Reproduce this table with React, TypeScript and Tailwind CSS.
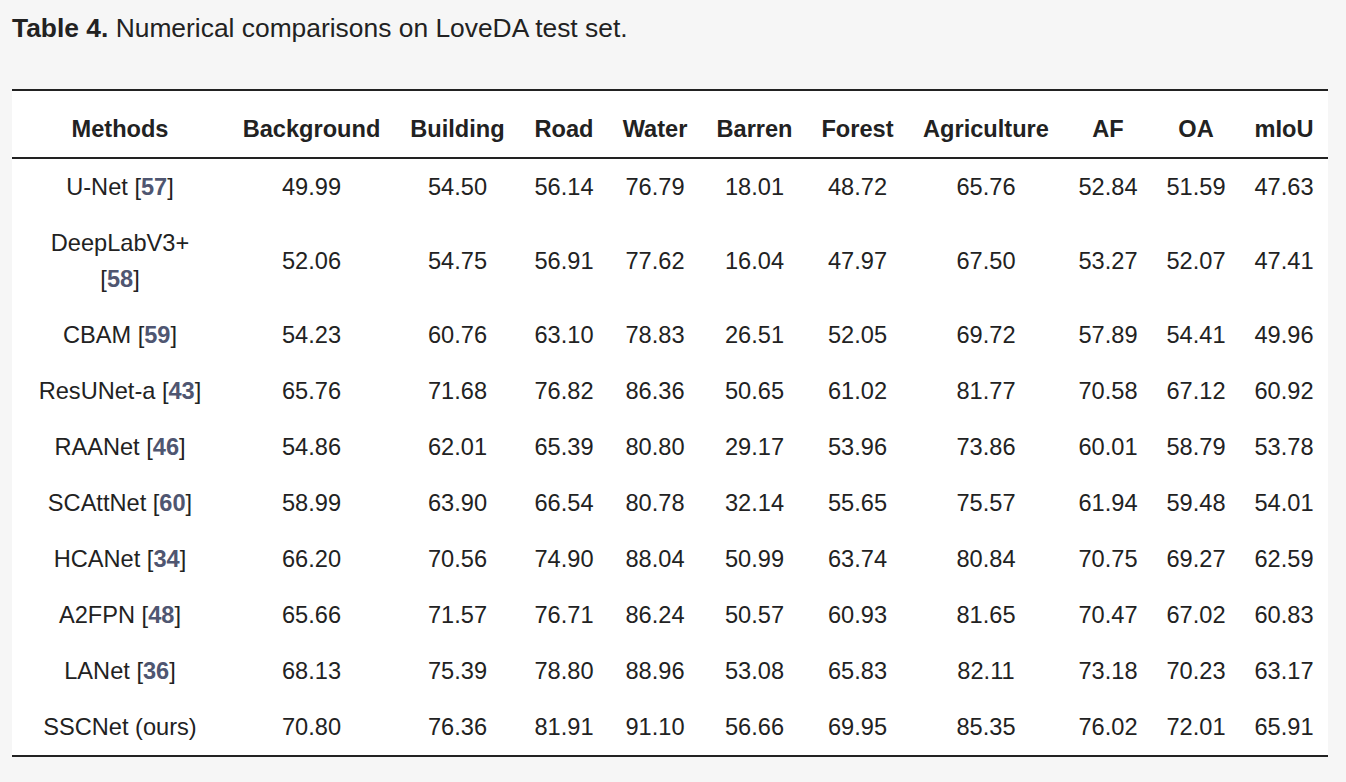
import React from "react";

type Row = { name: string; ref?: string; wrap?: boolean; vals: string[] };

const rows: Row[] = [
  { name: "U-Net", ref: "57", vals: ["49.99", "54.50", "56.14", "76.79", "18.01", "48.72", "65.76", "52.84", "51.59", "47.63"] },
  { name: "DeepLabV3+", ref: "58", wrap: true, vals: ["52.06", "54.75", "56.91", "77.62", "16.04", "47.97", "67.50", "53.27", "52.07", "47.41"] },
  { name: "CBAM", ref: "59", vals: ["54.23", "60.76", "63.10", "78.83", "26.51", "52.05", "69.72", "57.89", "54.41", "49.96"] },
  { name: "ResUNet-a", ref: "43", vals: ["65.76", "71.68", "76.82", "86.36", "50.65", "61.02", "81.77", "70.58", "67.12", "60.92"] },
  { name: "RAANet", ref: "46", vals: ["54.86", "62.01", "65.39", "80.80", "29.17", "53.96", "73.86", "60.01", "58.79", "53.78"] },
  { name: "SCAttNet", ref: "60", vals: ["58.99", "63.90", "66.54", "80.78", "32.14", "55.65", "75.57", "61.94", "59.48", "54.01"] },
  { name: "HCANet", ref: "34", vals: ["66.20", "70.56", "74.90", "88.04", "50.99", "63.74", "80.84", "70.75", "69.27", "62.59"] },
  { name: "A2FPN", ref: "48", vals: ["65.66", "71.57", "76.71", "86.24", "50.57", "60.93", "81.65", "70.47", "67.02", "60.83"] },
  { name: "LANet", ref: "36", vals: ["68.13", "75.39", "78.80", "88.96", "53.08", "65.83", "82.11", "73.18", "70.23", "63.17"] },
  { name: "SSCNet (ours)", vals: ["70.80", "76.36", "81.91", "91.10", "56.66", "69.95", "85.35", "76.02", "72.01", "65.91"] },
];

const headers = ["Methods", "Background", "Building", "Road", "Water", "Barren", "Forest", "Agriculture", "AF", "OA", "mIoU"];
const widths = [216, 167, 125, 88, 94, 105, 101, 156, 88, 88, 88];

function Ref({ n }: { n: string }) {
  return (
    <>
      [<a className="font-bold text-[#4f5671] no-underline">{n}</a>]
    </>
  );
}

export default function App() {
  return (
    <div
      className="min-h-[782px] w-full bg-[#f6f6f6] text-[#222222] px-3 pt-3"
      style={{ fontFamily: '"Liberation Sans", Arial, Helvetica, sans-serif' }}
    >
      <div className="text-[26.4px] leading-[30px] pt-px">
        <span className="font-bold">Table 4.</span> Numerical comparisons on LoveDA test set.
      </div>
      <table className="mt-[46px] table-fixed border-collapse bg-white text-[23.6px] leading-[36px] w-[1316px]">
        <colgroup>
          {widths.map((w, i) => (
            <col key={i} style={{ width: w }} />
          ))}
        </colgroup>
        <thead>
          <tr className="border-t-2 border-b-2 border-[#222222]">
            {headers.map((h) => (
              <th key={h} className="pt-[20px] pb-[10px] px-0 text-center font-bold whitespace-nowrap">
                {h}
              </th>
            ))}
          </tr>
        </thead>
        <tbody>
          {rows.map((r, idx) => (
            <tr key={r.name} className={idx === rows.length - 1 ? "border-b-2 border-[#222222]" : ""}>
              <td className="py-[10px] px-0 text-center align-middle">
                {r.wrap ? (
                  <>
                    {r.name}
                    <br />
                    <Ref n={r.ref!} />
                  </>
                ) : r.ref ? (
                  <>
                    {r.name} <Ref n={r.ref} />
                  </>
                ) : (
                  r.name
                )}
              </td>
              {r.vals.map((v, i) => (
                <td key={i} className="py-[10px] px-0 text-center align-middle">
                  {v}
                </td>
              ))}
            </tr>
          ))}
        </tbody>
      </table>
    </div>
  );
}
